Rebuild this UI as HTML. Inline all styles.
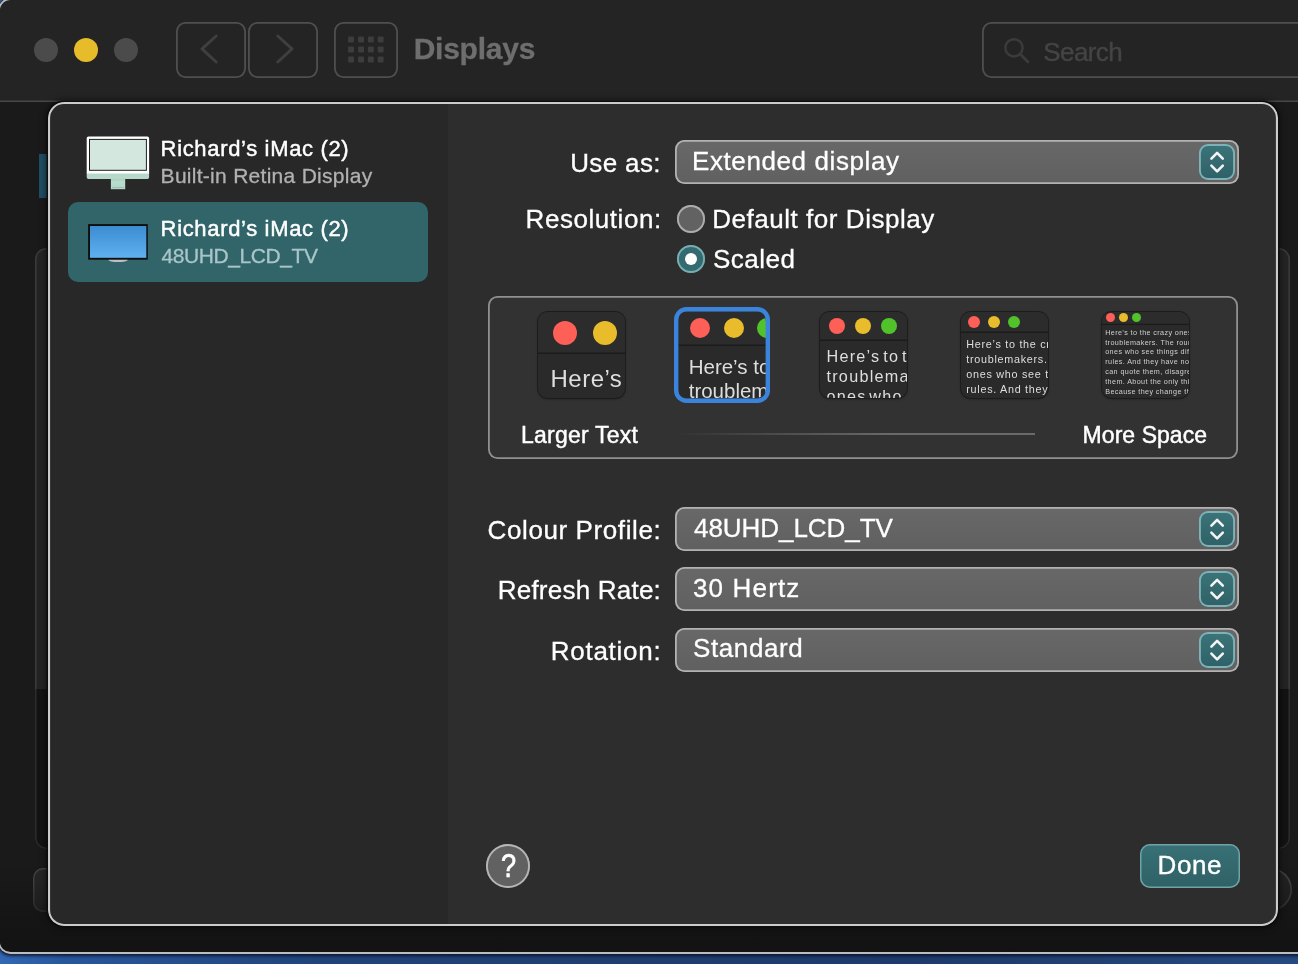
<!DOCTYPE html>
<html lang="en">
<head>
<meta charset="utf-8">
<title>Displays</title>
<style>
*{box-sizing:border-box;margin:0;padding:0}
html,body{width:1298px;height:964px;overflow:hidden}
body{position:relative;font-family:"Liberation Sans",sans-serif;color:#fff;
  background:linear-gradient(90deg,#3368b4 0,#28569b 5%,#20437a 25%,#1d3a6a 70%,#254981 100%);}
#root{position:absolute;left:0;top:0;width:1298px;height:964px;will-change:transform}
.abs{position:absolute}
.t{position:absolute;line-height:1;white-space:nowrap;-webkit-text-stroke:.3px currentColor}
/* ---------- main window ---------- */
#winclip{position:absolute;left:-2px;top:-2px;width:1340px;height:956px;border-radius:12.5px;background:#1a1a1a;overflow:hidden}
#winsh{position:absolute;left:-2px;top:-2px;width:1340px;height:956px;border-radius:12.5px;box-shadow:0 1px 3px 1px rgba(5,10,25,.75)}
#win{position:absolute;left:2px;top:2px;width:1320px;height:954px}
#winring{position:absolute;inset:0;border-radius:12.5px;box-shadow:inset 0 0 0 1.9px #bdbdbd}
#tbar{position:absolute;left:0;top:0;right:0;height:102px;background:#232423;box-shadow:inset 0 -1.6px 0 #484848}
#winfade{position:absolute;left:0;right:0;top:860px;height:95px;background:linear-gradient(#1a1a1a00,#121212)}
.tl{position:absolute;width:24px;height:24px;border-radius:50%;top:38px;background:#4b4b4b}
.nbtn{position:absolute;top:22.2px;height:55.4px;box-shadow:inset 0 0 0 1.8px #4f4f4f;border-radius:9.5px}
/* ---------- sheet ---------- */
#sheet{position:absolute;left:48px;top:102px;width:1230.3px;height:824.1px;border-radius:16px;
  background:#2d2d2d;overflow:hidden;box-shadow:0 0 0 1.5px #0c0c0c,0 0 6px 2px rgba(0,0,0,.5)}
#side{position:absolute;left:0;top:0;width:399.5px;bottom:0;background:#282828}
.sel{position:absolute;left:675px;width:563.8px;height:44px;border-radius:9.5px;background:linear-gradient(#686868,#606060);
  box-shadow:inset 0 0 0 1.8px #b2b2b2}
.step{position:absolute;right:3.8px;top:3.9px;width:36px;height:36.2px;border-radius:9px;background:linear-gradient(#3a7479,#2f6167);
  box-shadow:inset 0 0 0 1.9px #7fb1b6}
.lab{font-size:26px;text-align:right;right:638px}
.val{font-size:26px;left:693px}

.radio{position:absolute;left:676.8px;width:28.2px;height:28.2px;border-radius:50%;background:#626262;box-shadow:inset 0 0 0 1.9px #adadad}
.radio.on{background:#336b71;box-shadow:inset 0 0 0 1.9px #79adb1}
.radio.on::after{content:"";position:absolute;left:8px;top:8px;width:12px;height:12px;border-radius:50%;background:#fff}
#scaled{position:absolute;left:488.4px;top:295.8px;width:749.6px;height:163px;border-radius:9.5px;box-shadow:inset 0 0 0 1.8px #909090;background:#323232}
.th{position:absolute;top:311.6px;width:86.9px;height:86.9px;border-radius:9.5px;background:#2a2a2a;overflow:hidden;
  box-shadow:0 0 0 .9px #1c1c1c,0 1px 2.5px rgba(0,0,0,.45);color:#dedede}
.th .bar{position:absolute;left:0;right:0;top:0;background:#2c2c2c;box-shadow:inset 0 -1.5px 0 #1b1b1b}
.th i{position:absolute;border-radius:50%}
.th .r{background:#fe5f57}.th .y{background:#e8bc2a}.th .g{background:#52c22b}
.th .tx{position:absolute;white-space:nowrap}
.med{-webkit-text-stroke:0.45px currentColor}

.row1{font-size:22px;left:160.6px;letter-spacing:.66px}
.row2{font-size:21px;left:160.6px;letter-spacing:.28px}
</style>
</head>
<body>
<div id="root">
<div id="winsh"></div>
<div id="winclip"><div id="win">
  <div id="tbar"></div>

  <div class="abs" style="left:38.6px;top:153.6px;width:10px;height:44.5px;background:#1f4e62"></div>
  <div class="abs" style="left:34.5px;top:247.6px;width:1255px;height:601px;border-radius:11px;background:linear-gradient(#242424 0,#242424 440.6px,#131313 440.6px,#131313 100%);overflow:hidden"><div class="abs" style="inset:0;border-radius:11px;box-shadow:inset 0 0 0 1.6px rgba(255,255,255,.1)"></div></div>
  <div class="abs" style="left:33px;top:868px;width:200px;height:44px;box-shadow:inset 0 0 0 1.5px #484848;border-radius:10px;background:#292929"></div>
  <div class="abs" style="left:1248.5px;top:867.5px;width:43.5px;height:43.5px;box-shadow:inset 0 0 0 1.6px #4a4a4a;border-radius:50%;background:#252525"></div>
  <div id="winfade"></div>
</div><div id="winring"></div></div>

<!-- title bar controls (page coordinates) -->
<div class="tl" style="left:34px"></div>
<div class="tl" style="left:74px;background:#e6bc2b"></div>
<div class="tl" style="left:114px"></div>
<div class="nbtn" style="left:176px;width:70px"></div>
<div class="nbtn" style="left:248px;width:70px"></div>
<div class="nbtn" style="left:334px;width:64px"></div>
<div class="t" style="left:413.7px;top:34.3px;font-size:30px;font-weight:bold;color:#6e6e6e;letter-spacing:-.25px">Displays</div>
<div class="nbtn" style="left:982px;width:340px"></div>
<div class="t" style="left:1043.3px;top:38.5px;font-size:26px;color:#444;letter-spacing:-.6px;-webkit-text-stroke:.4px #444">Search</div>

<div id="sheet">
  <div id="side"></div>
  <div class="abs" style="inset:0;border-radius:16px;box-shadow:inset 0 0 0 2.1px #cbcbcb"></div>
</div>


<!-- nav icons -->
<svg class="abs" style="left:170px;top:15px" width="240" height="70" viewBox="170 15 240 70">
  <path d="M216.2 36 L202 48.9 L216.2 62" fill="none" stroke="#3f3f3f" stroke-width="3" stroke-linecap="round" stroke-linejoin="round"/>
  <path d="M277.8 36 L292 48.9 L277.8 62" fill="none" stroke="#3f3f3f" stroke-width="3" stroke-linecap="round" stroke-linejoin="round"/>
  <g fill="#3d3d3d">
    <rect x="348.1" y="36.6" width="5.9" height="5.9" rx="1"/><rect x="358.1" y="36.6" width="5.9" height="5.9" rx="1"/><rect x="367.9" y="36.6" width="5.9" height="5.9" rx="1"/><rect x="377.7" y="36.6" width="5.9" height="5.9" rx="1"/>
    <rect x="348.1" y="46.6" width="5.9" height="5.9" rx="1"/><rect x="358.1" y="46.6" width="5.9" height="5.9" rx="1"/><rect x="367.9" y="46.6" width="5.9" height="5.9" rx="1"/><rect x="377.7" y="46.6" width="5.9" height="5.9" rx="1"/>
    <rect x="348.1" y="56.6" width="5.9" height="5.9" rx="1"/><rect x="358.1" y="56.6" width="5.9" height="5.9" rx="1"/><rect x="367.9" y="56.6" width="5.9" height="5.9" rx="1"/><rect x="377.7" y="56.6" width="5.9" height="5.9" rx="1"/>
  </g>
</svg>
<svg class="abs" style="left:1000px;top:34px" width="34" height="34" viewBox="1000 34 34 34">
  <circle cx="1014" cy="47.8" r="8.6" fill="none" stroke="#3b3b3b" stroke-width="2.5"/>
  <path d="M1020.3 54.3 L1028 62" stroke="#3b3b3b" stroke-width="2.8" stroke-linecap="round"/>
</svg>

<!-- sidebar rows -->
<div class="abs" style="left:68px;top:202px;width:360px;height:80px;border-radius:10px;background:#32656a"></div>
<svg class="abs" style="left:84px;top:134px" width="70" height="60" viewBox="84 134 70 60">
  <defs>
    <linearGradient id="tvg" x1="0" y1="0" x2="0" y2="1"><stop offset="0" stop-color="#3c8cd1"/><stop offset="1" stop-color="#5eb1ef"/></linearGradient>
    <linearGradient id="stg" x1="0" y1="0" x2="0" y2="1"><stop offset="0" stop-color="#a4cdbb"/><stop offset=".35" stop-color="#b9dccd"/><stop offset="1" stop-color="#b3d8c8"/></linearGradient>
  </defs>
  <rect x="110.9" y="178" width="14.3" height="11.2" fill="url(#stg)"/>
  <rect x="112" y="187.2" width="12" height="0.9" fill="#8fbfa9"/>
  <path d="M86.7 173 H149.1 V177.3 a1.8 1.8 0 0 1 -1.8 1.8 H88.5 a1.8 1.8 0 0 1 -1.8 -1.8 Z" fill="#b6d9ca"/>
  <path d="M86.7 173.4 V138.2 a1.8 1.8 0 0 1 1.8 -1.8 H147.3 a1.8 1.8 0 0 1 1.8 1.8 V173.4 Z" fill="#ffffff"/>
  <rect x="89" y="138.9" width="57.9" height="31.9" fill="#1c1c1c"/>
  <rect x="90" y="139.9" width="55.9" height="29.9" fill="#d3e7df"/>
</svg>
<svg class="abs" style="left:84px;top:220px" width="70" height="46" viewBox="84 220 70 46">
  <ellipse cx="118.1" cy="259.7" rx="9.7" ry="2.4" fill="#bfbfbf"/>
  <rect x="88.1" y="224.1" width="59.7" height="35.6" fill="#0e0e0e"/>
  <rect x="90" y="226" width="56.3" height="31.8" fill="url(#tvg)"/>
</svg>
<div class="t row1 med" style="top:138px">Richard’s iMac (2)</div>
<div class="t row2" style="top:165px;color:#b1b1b1">Built-in Retina Display</div>
<div class="t row1 med" style="top:218px">Richard’s iMac (2)</div>
<div class="t row2" style="top:245px;color:#a9c5c7;letter-spacing:-.42px;left:161.6px">48UHD_LCD_TV</div>

<div class="t lab" style="top:150px;right:637.2px;letter-spacing:.35px">Use as:</div>
<div class="sel" style="top:140px"><div class="step"><svg class="abs" style="left:0;top:0" width="36" height="36" viewBox="0 0 36 36"><path d="M12.4 14.6 L18.1 8.9 L23.8 14.6 M12.4 21.7 L18.1 27.4 L23.8 21.7" fill="none" stroke="#f4f4f4" stroke-width="2.6" stroke-linecap="round" stroke-linejoin="round"/></svg></div></div>
<div class="t val" style="top:148px;left:692px;letter-spacing:.6px">Extended display</div>

<div class="t lab" style="top:206px;right:636.3px;letter-spacing:.55px">Resolution:</div>

<div class="radio" style="top:205px"></div>
<div class="t" style="left:712.2px;top:206px;font-size:26px;letter-spacing:.54px">Default for Display</div>
<div class="radio on" style="top:245px"></div>
<div class="t" style="left:713px;top:246px;font-size:26px;letter-spacing:.5px">Scaled</div>

<div id="scaled"></div>
<!-- thumb 1 -->
<div class="th" style="left:537.7px">
  <div class="bar" style="height:42.4px"></div>
  <i class="r" style="left:15.25px;top:9.3px;width:24.2px;height:24.2px"></i>
  <i class="y" style="left:55.2px;top:9.3px;width:24.2px;height:24.2px"></i>
  <i class="g" style="left:95.2px;top:9.3px;width:24.2px;height:24.2px"></i>
  <div class="tx" style="left:12.9px;top:54.1px;font-size:24px;line-height:26px;letter-spacing:.46px">Here’s to the crazy ones</div>
</div>
<!-- thumb 2 (selected) -->
<div class="th" style="left:678.2px;box-shadow:none;width:87.6px">
  <div class="bar" style="height:34.65px"></div>
  <i class="r" style="left:11.5px;top:6.1px;width:20.4px;height:20.4px"></i>
  <i class="y" style="left:45.6px;top:6.1px;width:20.4px;height:20.4px"></i>
  <i class="g" style="left:79.2px;top:6.1px;width:20.4px;height:20.4px"></i>
  <div class="tx" style="left:10.5px;top:43.05px;font-size:20.5px;line-height:24.7px;letter-spacing:0">Here’s to the crazy<br>troublemakers.</div>
</div>
<div class="abs" style="left:673.6px;top:306.7px;width:96.7px;height:96.6px;border-radius:12.5px;box-shadow:inset 0 0 0 4.4px #3a84dc"></div>
<!-- thumb 3 -->
<div class="th" style="left:819.7px">
  <div class="bar" style="height:29.45px"></div>
  <i class="r" style="left:9.2px;top:6.4px;width:16.2px;height:16.2px"></i>
  <i class="y" style="left:35.1px;top:6.4px;width:16.2px;height:16.2px"></i>
  <i class="g" style="left:61.3px;top:6.4px;width:16.2px;height:16.2px"></i>
  <div class="tx" style="left:6.8px;top:34.5px;font-size:16.2px;line-height:20.1px;letter-spacing:1.25px;word-spacing:-3px">Here’s to the crazy<br>troublemakers. The<br>ones who see</div>
</div>
<!-- thumb 4 -->
<div class="th" style="left:960.8px">
  <div class="bar" style="height:21.35px"></div>
  <i class="r" style="left:7.05px;top:4.25px;width:12.5px;height:12.5px"></i>
  <i class="y" style="left:27.05px;top:4.25px;width:12.5px;height:12.5px"></i>
  <i class="g" style="left:46.95px;top:4.25px;width:12.5px;height:12.5px"></i>
  <div class="tx" style="left:5.5px;top:25.85px;font-size:10.8px;line-height:15px;letter-spacing:.71px">Here’s to the crazy ones<br>troublemakers. The<br>ones who see things<br>rules. And they have</div>
</div>
<!-- thumb 5 -->
<div class="th" style="left:1101.7px">
  <div class="bar" style="height:13.4px;box-shadow:inset 0 -1.2px 0 #1b1b1b"></div>
  <i class="r" style="left:4.2px;top:1.5px;width:9.2px;height:9.2px"></i>
  <i class="y" style="left:17.1px;top:1.5px;width:9.2px;height:9.2px"></i>
  <i class="g" style="left:30.1px;top:1.5px;width:9.2px;height:9.2px"></i>
  <div class="tx" style="left:3.55px;top:16.04px;font-size:7.2px;line-height:9.92px;letter-spacing:.39px;color:#cfcfcf">Here’s to the crazy ones, the<br>troublemakers. The round pegs<br>ones who see things differently<br>rules. And they have no respect<br>can quote them, disagree with<br>them. About the only thing you<br>Because they change things</div>
</div>
<div class="t med" style="left:521px;top:423.6px;font-size:23px;letter-spacing:.23px">Larger Text</div>
<div class="abs" style="left:677px;top:433px;width:358px;height:1.5px;background:linear-gradient(90deg,#32323200,#6a6a6a 60%)"></div>
<div class="t med" style="left:1082.6px;top:423.6px;font-size:23px;letter-spacing:.05px">More Space</div>

<div class="t lab" style="top:517px;right:636.7px;letter-spacing:.6px">Colour Profile:</div>
<div class="sel" style="top:507px"><div class="step"><svg class="abs" style="left:0;top:0" width="36" height="36" viewBox="0 0 36 36"><path d="M12.4 14.6 L18.1 8.9 L23.8 14.6 M12.4 21.7 L18.1 27.4 L23.8 21.7" fill="none" stroke="#f4f4f4" stroke-width="2.6" stroke-linecap="round" stroke-linejoin="round"/></svg></div></div>
<div class="t val" style="top:514.5px;left:694px;letter-spacing:-.05px">48UHD_LCD_TV</div>

<div class="t lab" style="top:577px;right:637px;letter-spacing:.22px">Refresh Rate:</div>
<div class="sel" style="top:567px"><div class="step"><svg class="abs" style="left:0;top:0" width="36" height="36" viewBox="0 0 36 36"><path d="M12.4 14.6 L18.1 8.9 L23.8 14.6 M12.4 21.7 L18.1 27.4 L23.8 21.7" fill="none" stroke="#f4f4f4" stroke-width="2.6" stroke-linecap="round" stroke-linejoin="round"/></svg></div></div>
<div class="t val" style="top:575px;letter-spacing:1.15px">30 Hertz</div>

<div class="t lab" style="top:637.6px;right:636.5px;letter-spacing:.75px">Rotation:</div>
<div class="sel" style="top:628px"><div class="step"><svg class="abs" style="left:0;top:0" width="36" height="36" viewBox="0 0 36 36"><path d="M12.4 14.6 L18.1 8.9 L23.8 14.6 M12.4 21.7 L18.1 27.4 L23.8 21.7" fill="none" stroke="#f4f4f4" stroke-width="2.6" stroke-linecap="round" stroke-linejoin="round"/></svg></div></div>
<div class="t val" style="top:635.4px;letter-spacing:.6px">Standard</div>

<div class="abs" style="left:486px;top:843.9px;width:44.1px;height:44.2px;border-radius:50%;background:#616161;box-shadow:inset 0 0 0 1.9px #b6b6b6"></div>
<div class="t" id="q" style="left:499.3px;top:848.3px;font-size:34px;-webkit-text-stroke:.7px #fff;transform:scaleX(.8);transform-origin:50% 50%">?</div>
<div class="abs" style="left:1140px;top:844px;width:100px;height:44px;border-radius:10px;background:linear-gradient(#387176,#2f6166);box-shadow:inset 0 0 0 1.5px #6ea3a7"></div>
<div class="t" style="left:1157.6px;top:852px;font-size:26px;letter-spacing:.55px;-webkit-text-stroke:.35px #fff">Done</div>

</div>
</body>
</html>
